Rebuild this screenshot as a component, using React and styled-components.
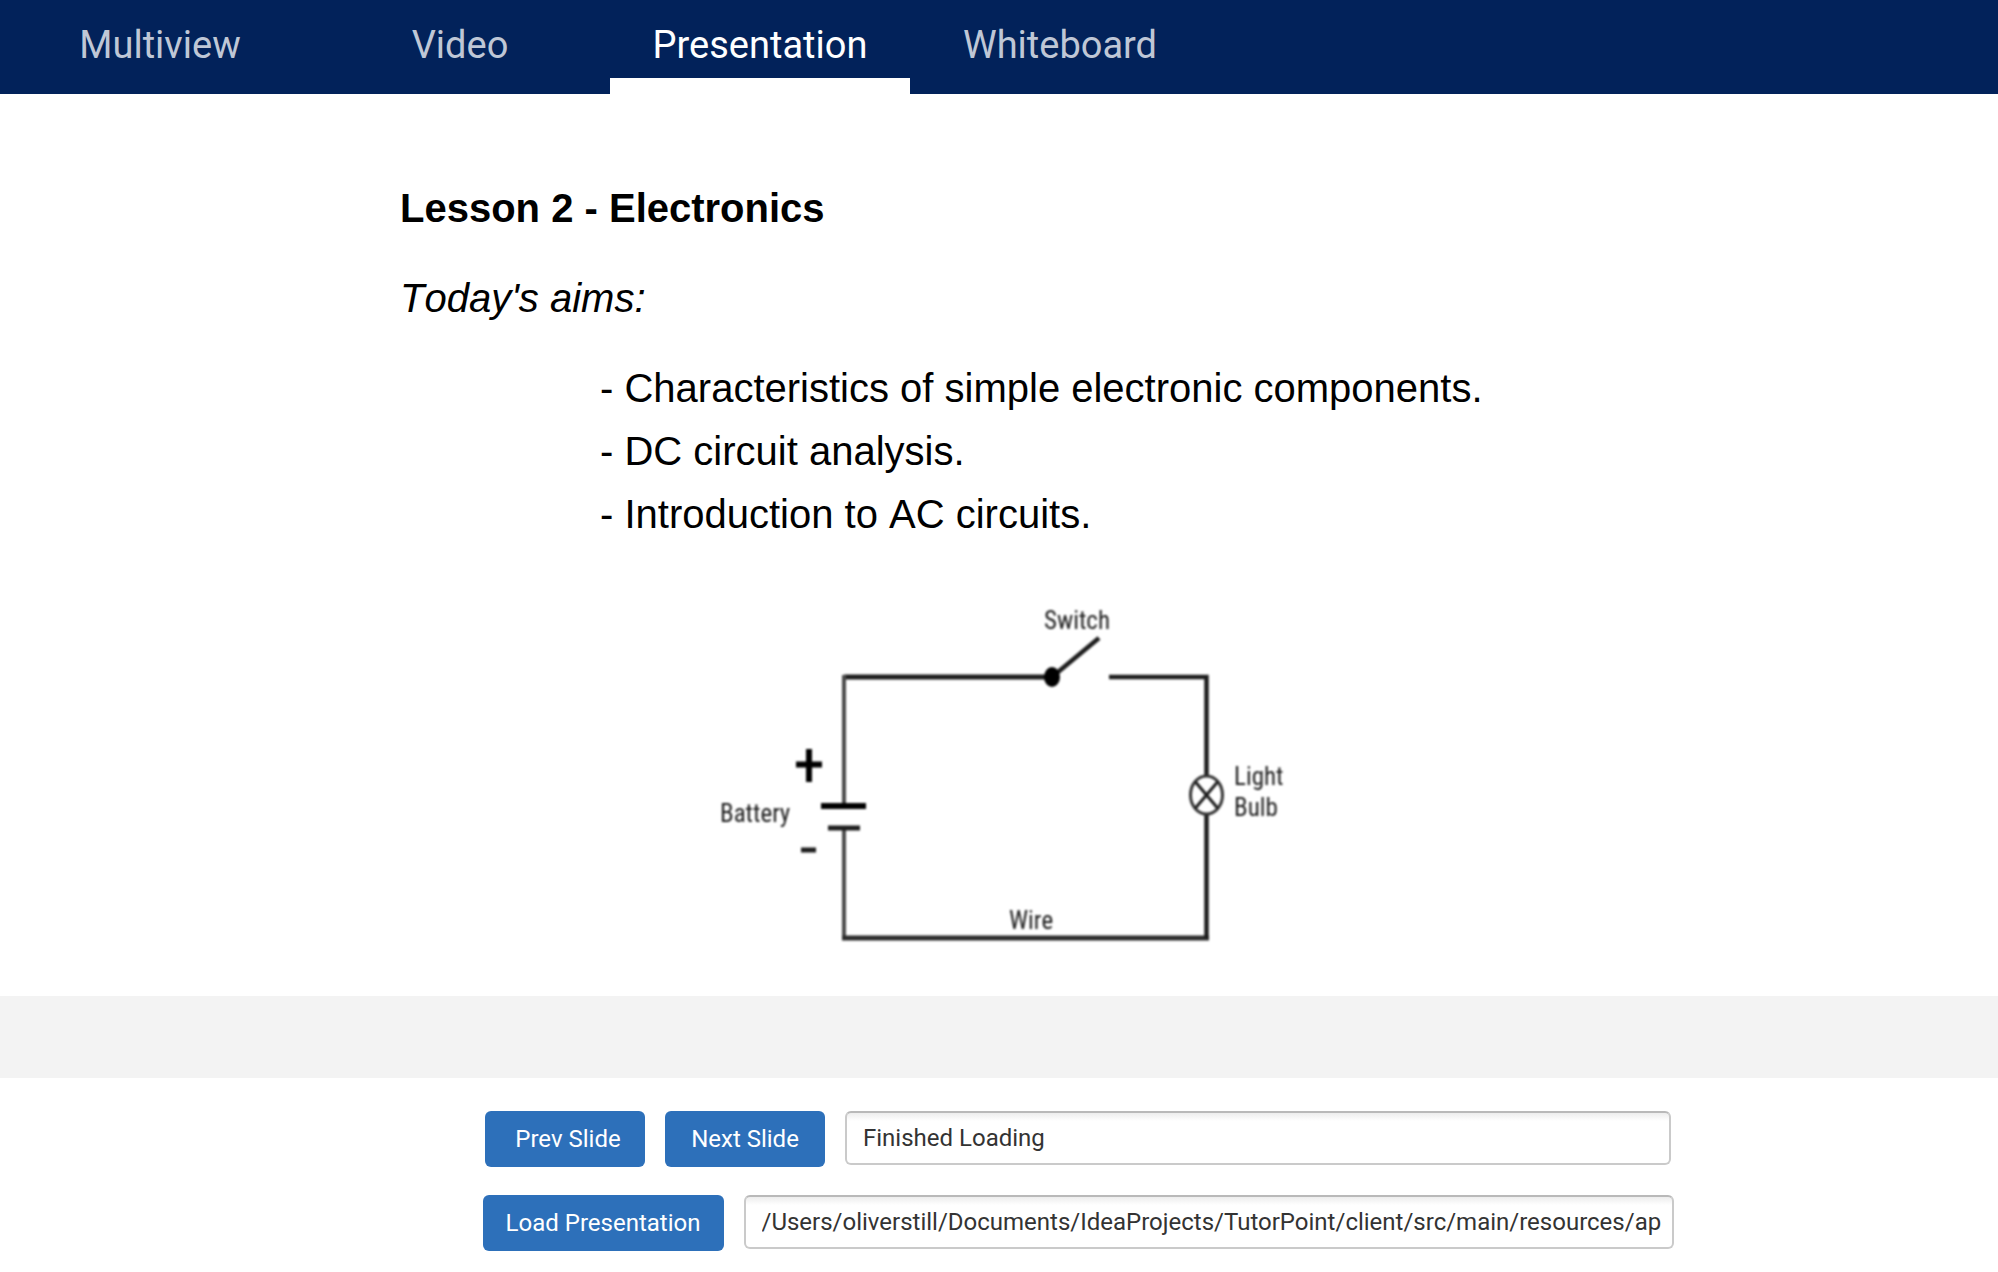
import React, { useState } from "react";
import styled, { createGlobalStyle } from "styled-components";

const GlobalStyle = createGlobalStyle`
  *, *::before, *::after { box-sizing: border-box; }
  body { margin: 0; background: #ffffff; }
`;

const uiFont = `Roboto, "Liberation Sans", sans-serif`;
const slideFont = `"Liberation Sans", Arial, sans-serif`;

const Page = styled.div`
  display: flex;
  flex-direction: column;
  min-height: 100vh;
  font-family: ${uiFont};
`;

const TabBar = styled.nav`
  display: flex;
  height: 94px;
  padding-left: 10px;
  background: #02225a;
`;

const Tab = styled.button`
  width: 300px;
  padding: 12px 0 0;
  border: 0;
  border-bottom: 16px solid ${(p) => (p.$active ? "#ffffff" : "transparent")};
  background: none;
  color: ${(p) => (p.$active ? "#ffffff" : "#bfc7d6")};
  font: 400 38px/48px ${uiFont};
  cursor: pointer;
`;

const Slide = styled.main`
  display: flex;
  flex-direction: column;
  align-items: flex-start;
  padding: 84px 40px 47px 400px;
  color: #000000;
  font-family: ${slideFont};
  font-size: 40px;
  font-kerning: none;
  line-height: 60px;
`;

const SlideTitle = styled.h1`
  margin: 0 0 30px;
  font-size: 40px;
  font-weight: 700;
`;

const SlideLead = styled.p`
  margin: 0 0 29px;
  font-style: italic;
`;

const AimList = styled.ul`
  margin: 0 0 54px;
  padding-left: 200px;
  list-style: none;
  line-height: 63px;
`;

const Circuit = styled.svg`
  display: block;
  margin-left: 320px;
  filter: blur(0.8px);
`;

const CircuitLabel = styled.text`
  font-family: "Roboto Condensed", "Liberation Sans", sans-serif;
  font-size: 25px;
  fill: #1c1c1c;
`;

const Divider = styled.div`
  height: 82px;
  background: #f3f3f3;
`;

const Controls = styled.form`
  display: flex;
  flex-direction: column;
  align-items: center;
  gap: 28px;
  padding: 33px 0 21px 158px;
`;

const ControlRow = styled.div`
  display: flex;
  gap: 20px;
  max-width: 100%;
`;

const ActionButton = styled.button`
  flex: none;
  width: ${(p) => (p.$wide ? 241 : 160)}px;
  height: 56px;
  padding: 0;
  border: 0;
  border-radius: 6px;
  background: #2d70ba;
  color: #ffffff;
  font: 400 24px/56px ${uiFont};
  white-space: pre;
  cursor: pointer;
`;

const Field = styled.input`
  flex: 0 1 ${(p) => p.$basis}px;
  min-width: 0;
  width: ${(p) => p.$basis}px;
  height: 54px;
  padding: 0 10px 0 16px;
  border: 2px solid #cacaca;
  border-top-color: #b9b9b9;
  border-radius: 6px;
  background: linear-gradient(#ededed, #ffffff 8px);
  color: #333333;
  font: 400 24px/50px ${uiFont};
`;

const tabs = ["Multiview", "Video", "Presentation", "Whiteboard"];

const aims = [
  "Characteristics of simple electronic components.",
  "DC circuit analysis.",
  "Introduction to AC circuits.",
];

function CircuitDiagram() {
  return (
    <Circuit width="570" height="349" viewBox="0 0 570 349" role="img" aria-label="Battery, switch and light bulb circuit">
      <g fill="none" stroke="#1c1c1c">
        <path d="M124 77H332" strokeWidth="5" />
        <path d="M124 75V206M124 228V340" stroke="#4a4a4a" strokeWidth="4" />
        <path d="M122 338H489" stroke="#2b2b2b" strokeWidth="5" />
        <path d="M389 77H486.500V176M486.500 214V338" strokeWidth="4.500" />
        <path d="M332 77L379 38" strokeWidth="4.500" />
        <path d="M101 206H146" stroke="#000000" strokeWidth="6" />
        <path d="M108 228H140" strokeWidth="5" />
        <path d="M76 164.500H102M89 149V182" stroke="#000000" strokeWidth="6" />
        <path d="M81 250H96" strokeWidth="5" />
        <ellipse cx="486.500" cy="195" rx="16" ry="19" stroke="#333333" strokeWidth="3" />
        <path d="M475.500 182L497.500 208M497.500 182L475.500 208" strokeWidth="3" />
      </g>
      <ellipse cx="332" cy="77" rx="8" ry="10" fill="#000000" />
      <CircuitLabel x="324" y="29">Switch</CircuitLabel>
      <CircuitLabel x="0" y="222">Battery</CircuitLabel>
      <CircuitLabel x="289" y="329">Wire</CircuitLabel>
      <CircuitLabel x="514" y="185">Light</CircuitLabel>
      <CircuitLabel x="514" y="216">Bulb</CircuitLabel>
    </Circuit>
  );
}

export default function App() {
  const [active, setActive] = useState("Presentation");
  const [path, setPath] = useState(
    "/Users/oliverstill/Documents/IdeaProjects/TutorPoint/client/src/main/resources/ap"
  );

  return (
    <Page>
      <GlobalStyle />
      <TabBar role="tablist">
        {tabs.map((name) => (
          <Tab
            key={name}
            type="button"
            role="tab"
            aria-selected={name === active}
            $active={name === active}
            onClick={() => setActive(name)}
          >
            {name}
          </Tab>
        ))}
      </TabBar>
      <Slide>
        <SlideTitle>Lesson 2 - Electronics</SlideTitle>
        <SlideLead>Today's aims:</SlideLead>
        <AimList>
          {aims.map((aim) => (
            <li key={aim}>- {aim}</li>
          ))}
        </AimList>
        <CircuitDiagram />
      </Slide>
      <Divider />
      <Controls onSubmit={(e) => e.preventDefault()}>
        <ControlRow>
          <ActionButton type="button">{" Prev Slide"}</ActionButton>
          <ActionButton type="button">Next Slide</ActionButton>
          <Field $basis={826} aria-label="Status" readOnly value="Finished Loading" />
        </ControlRow>
        <ControlRow>
          <ActionButton type="submit" $wide>Load Presentation</ActionButton>
          <Field
            $basis={930}
            aria-label="Presentation path"
            value={path}
            onChange={(e) => setPath(e.target.value)}
          />
        </ControlRow>
      </Controls>
    </Page>
  );
}
